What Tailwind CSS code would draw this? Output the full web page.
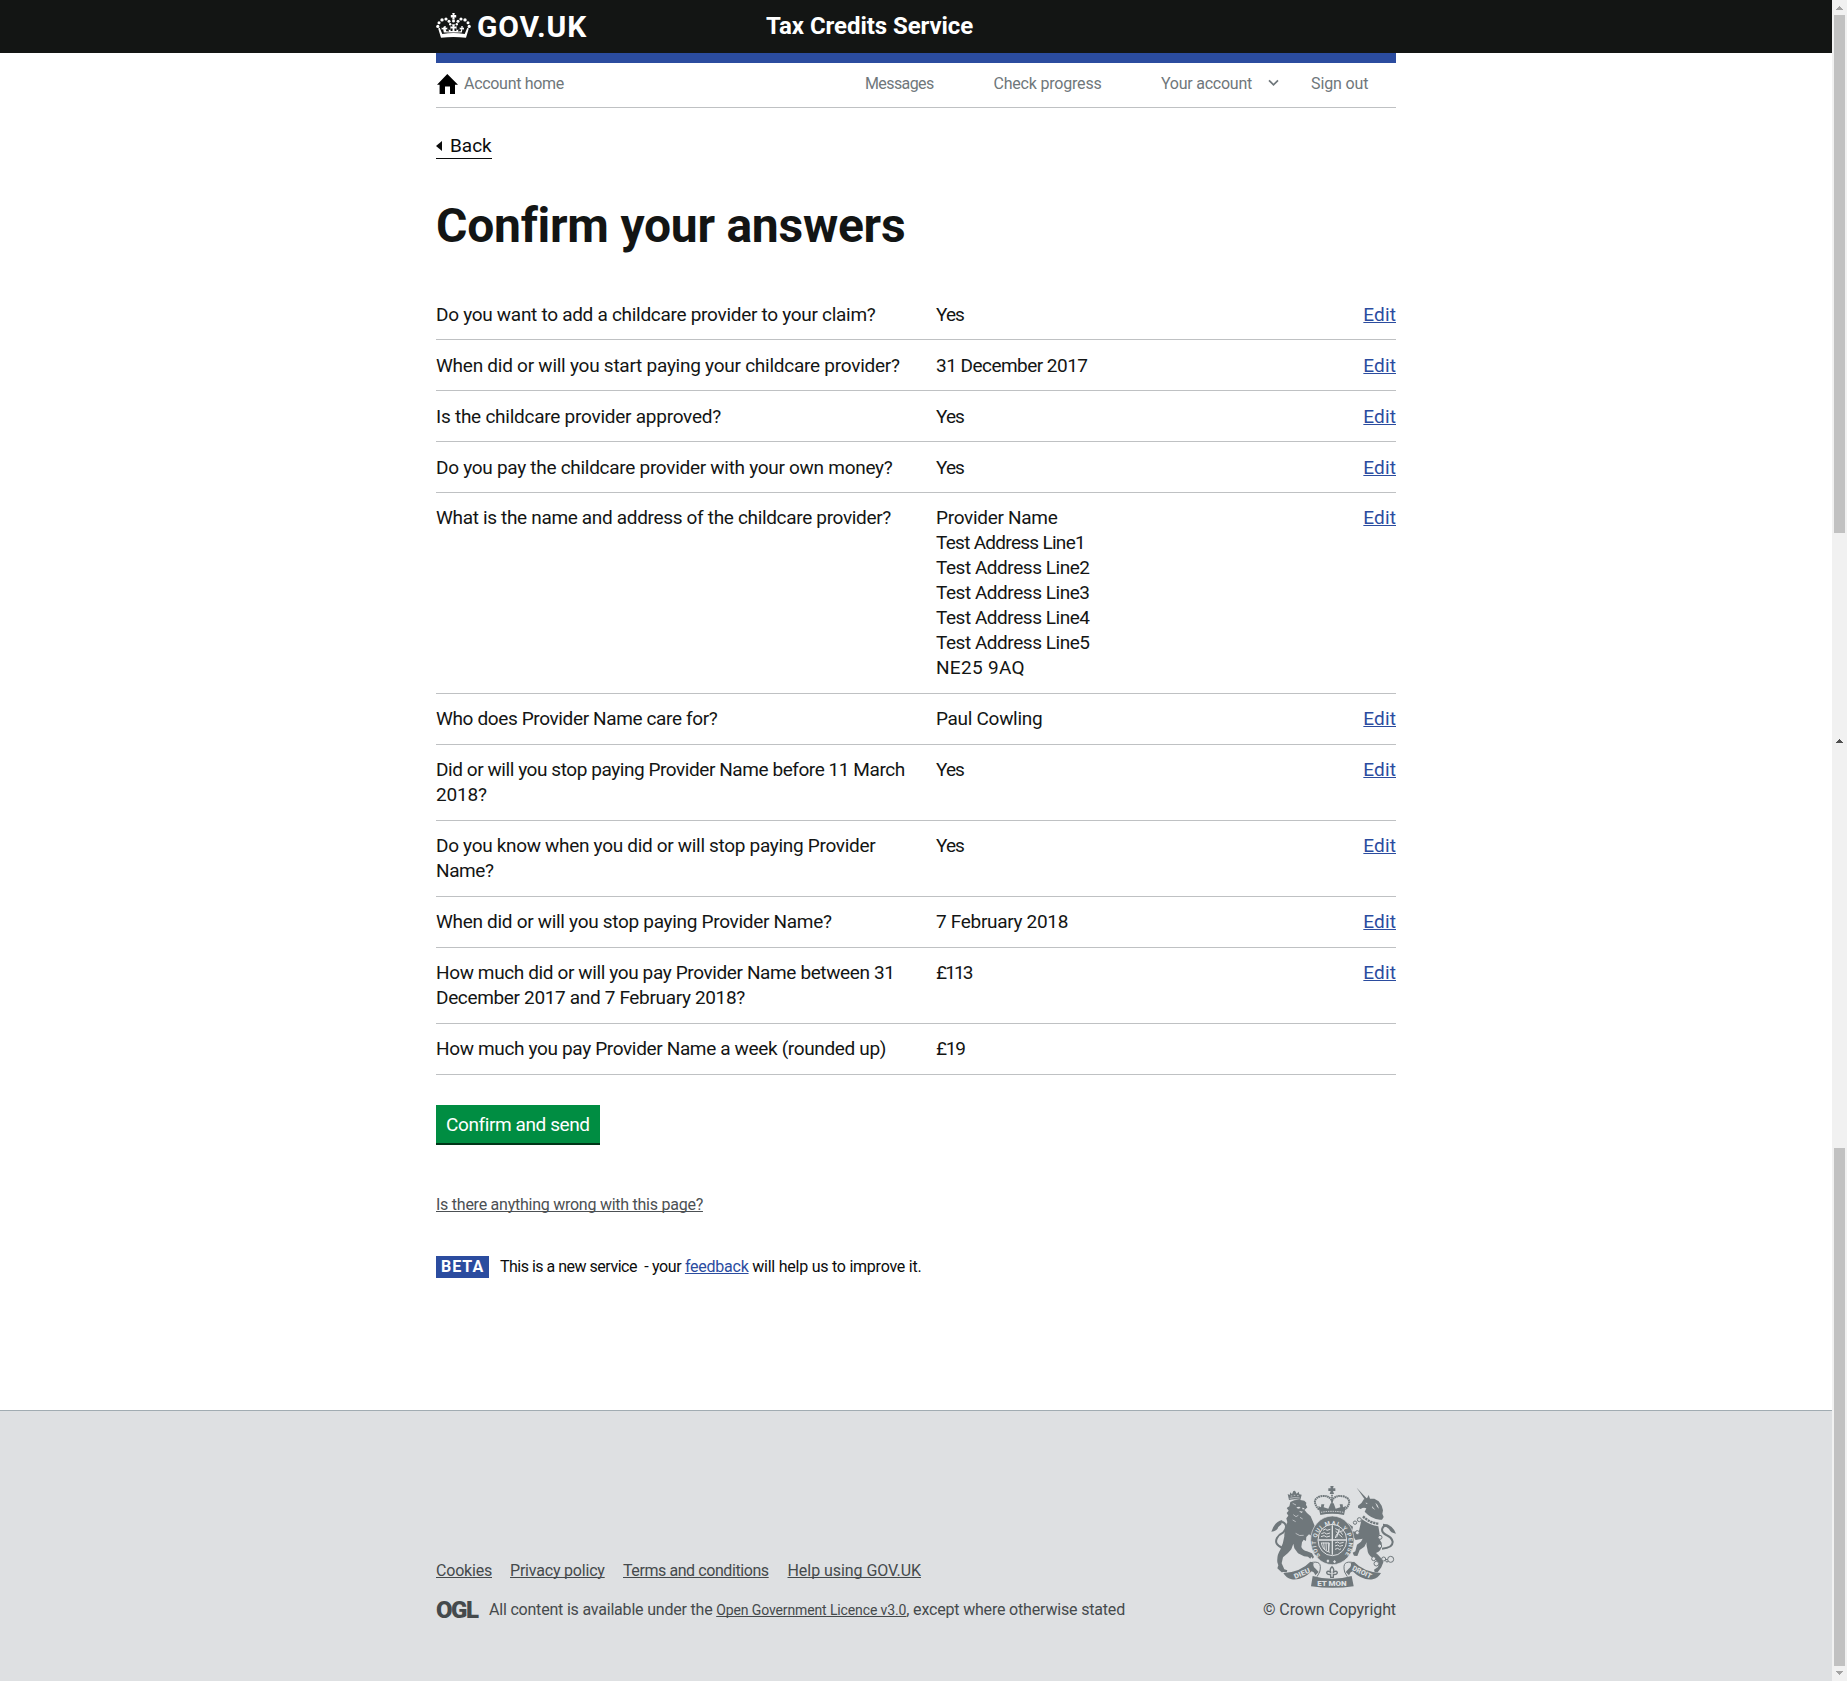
<!DOCTYPE html>
<html lang="en">
<head>
<meta charset="utf-8">
<title>Confirm your answers - Tax Credits Service</title>
<script src="https://cdn.jsdelivr.net/npm/@tailwindcss/browser@4"></script>
</head>
<body class="h-[1681px] overflow-hidden bg-white font-[Roboto,sans-serif] text-[#0b0c0c]">
<div class="flex h-[1681px]">
<div class="flex h-full w-[1832px] flex-col">

  <header class="h-[53px] bg-[#131514] text-white">
    <div class="mx-auto flex w-[960px] items-start">
      <div class="flex w-[330px] items-start gap-[5px]">
        <svg class="mt-[13px] h-[26px] w-[36px]" viewBox="0 0 36 26" fill="#fff">
          <path d="M16.2 0h2.6l-.5 2h1.9v2.4h-1.9l.6 2h-2.8l.6-2h-1.9V2h1.9z"/>
          <circle cx="17.5" cy="8" r="1.5"/>
          <circle cx="1.8" cy="13.4" r="1.6"/><circle cx="3" cy="9.8" r="1.5"/><circle cx="6" cy="6.9" r="1.7"/><circle cx="10" cy="6" r="1.6"/><circle cx="13" cy="8.3" r="1.5"/><circle cx="14.2" cy="11.2" r="1.2"/>
          <circle cx="33.2" cy="13.4" r="1.6"/><circle cx="32" cy="9.8" r="1.5"/><circle cx="29" cy="6.9" r="1.7"/><circle cx="25" cy="6" r="1.6"/><circle cx="22" cy="8.3" r="1.5"/><circle cx="20.8" cy="11.2" r="1.2"/>
          <path d="M2.2 15.4l1.5-.6 2.6 6.1q11.200-2 22.400 0l2.600-6.100 1.500.6-2.800 9.400q-12.500-1.700-25 0z"/>
          <path d="M8 13.200h2l-.4 1.700 1.700-.5v2.200l-1.600-.4.6 2.100 2.800.1-.7-2 1.800.7.800-1.500-.5 2.300q1 .6 2.200-.5l-.3-2.200-2 .5v-2.400l2.100.5-.4-2.500h2.800l-.4 2.500 2.100-.5v2.400l-2-.5-.3 2.200q1.200 1.100 2.200.5l-.5-2.300.8 1.500 1.800-.7-.7 2 2.800-.1.600-2.100-1.600.4v-2.200l1.700.5-.4-1.700h2l-.4 1.700 1.400-.3v1.800l-1.600-.2-.6 3.200h-18l-.6-3.200-1.600.2v-1.800l1.400.3z"/>
        </svg>
        <span class="mt-[12px] text-[30px] leading-[30px] font-bold tracking-[0.9px]">GOV.UK</span>
      </div>
      <span class="mt-[11px] text-[24px] leading-[30px] font-bold tracking-[-0.06px]">Tax Credits Service</span>
    </div>
  </header>

  <div class="mx-auto w-[960px]">
    <div class="h-[10px] bg-[#2b4c9f]"></div>
    <nav class="flex h-[45px] items-start border-b border-[#bfc1c3] pt-[11px] text-[16px] leading-[20px] text-[#6f777b]">
      <svg class="ml-[1px] h-[20px] w-[21px]" viewBox="0 0 21 20" fill="#000"><path d="M10.300 0L21 10.800h-3V20h-5v-7.500H8V20H2.600v-9.200H0z"/></svg>
      <a class="ml-[6px] tracking-[-0.3px]">Account home</a>
      <a class="ml-auto w-[69px] tracking-[-0.6px]">Messages</a>
      <a class="ml-[59.500px] w-[108px] tracking-[-0.2px]">Check progress</a>
      <a class="ml-[59.500px] w-[91px] whitespace-nowrap tracking-[-0.24px]">Your account</a>
      <svg class="mt-[5px] ml-[16px] h-[8px] w-[11px]" viewBox="0 0 11 8" fill="none" stroke="#6f777b" stroke-width="1.700"><path d="M1 1.300l4.500 4.500L10 1.300"/></svg>
      <a class="mr-[28px] ml-[32px] w-[57px] whitespace-nowrap tracking-[-0.12px]">Sign out</a>
    </nav>

    <main class="flex flex-col items-start">
      <a class="mt-[26px] flex w-[56px] items-center border-b border-[#0b0c0c] pb-[1px] text-[19px] leading-[23px]">
        <svg class="mr-[8px] h-[10px] w-[6px]" viewBox="0 0 6 10"><path fill="#0b0c0c" d="M6 0v10L0 5z"/></svg><span>Back</span>
      </a>
      <h1 class="mt-[42px] text-[48px] leading-[50px] font-bold tracking-[-0.25px] whitespace-nowrap text-[#131514]">Confirm your answers</h1>

      <dl class="mt-[38px] w-full text-[19px] leading-[25px] whitespace-nowrap text-[#131514]">
        <div class="flex border-b border-[#bfc1c3] pt-[13px] pb-[12px]">
          <dt class="w-[500px] tracking-[-0.29px]">Do you want to add a childcare provider to your claim?</dt>
          <dd class="tracking-[-0.9px]">Yes</dd>
          <dd class="ml-auto"><a class="text-[#2b4c9f] underline decoration-1 underline-offset-1 tracking-[0.12px] [text-decoration-skip-ink:none]">Edit</a></dd>
        </div>
        <div class="flex border-b border-[#bfc1c3] pt-[13px] pb-[12px]">
          <dt class="w-[500px] tracking-[-0.25px]">When did or will you start paying your childcare provider?</dt>
          <dd class="tracking-[-0.53px]">31 December 2017</dd>
          <dd class="ml-auto"><a class="text-[#2b4c9f] underline decoration-1 underline-offset-1 tracking-[0.12px] [text-decoration-skip-ink:none]">Edit</a></dd>
        </div>
        <div class="flex border-b border-[#bfc1c3] pt-[13px] pb-[12px]">
          <dt class="w-[500px] tracking-[-0.25px]">Is the childcare provider approved?</dt>
          <dd class="tracking-[-0.9px]">Yes</dd>
          <dd class="ml-auto"><a class="text-[#2b4c9f] underline decoration-1 underline-offset-1 tracking-[0.12px] [text-decoration-skip-ink:none]">Edit</a></dd>
        </div>
        <div class="flex border-b border-[#bfc1c3] pt-[13px] pb-[12px]">
          <dt class="w-[500px] tracking-[-0.285px]">Do you pay the childcare provider with your own money?</dt>
          <dd class="tracking-[-0.9px]">Yes</dd>
          <dd class="ml-auto"><a class="text-[#2b4c9f] underline decoration-1 underline-offset-1 tracking-[0.12px] [text-decoration-skip-ink:none]">Edit</a></dd>
        </div>
        <div class="flex border-b border-[#bfc1c3] pt-[12px] pb-[13px]">
          <dt class="w-[500px] tracking-[-0.33px]">What is the name and address of the childcare provider?</dt>
          <dd class="tracking-[-0.46px]"><span class="tracking-[-0.3px]">Provider Name</span><br><span class="tracking-[-0.713px]">Test Address Line1</span><br>Test Address Line2<br>Test Address Line3<br>Test Address Line4<br>Test Address Line5<br><span class="tracking-[0.316px]">NE25 9AQ</span></dd>
          <dd class="ml-auto"><a class="text-[#2b4c9f] underline decoration-1 underline-offset-1 tracking-[0.12px] [text-decoration-skip-ink:none]">Edit</a></dd>
        </div>
        <div class="flex border-b border-[#bfc1c3] pt-[12px] pb-[13px]">
          <dt class="w-[500px] tracking-[-0.37px]">Who does Provider Name care for?</dt>
          <dd class="tracking-[-0.3px]">Paul Cowling</dd>
          <dd class="ml-auto"><a class="text-[#2b4c9f] underline decoration-1 underline-offset-1 tracking-[0.12px] [text-decoration-skip-ink:none]">Edit</a></dd>
        </div>
        <div class="flex border-b border-[#bfc1c3] pt-[12px] pb-[13px]">
          <dt class="w-[500px] tracking-[-0.435px]">Did or will you stop paying Provider Name before 11 March<br><span class="tracking-[-0.2px]">2018?</span></dt>
          <dd class="tracking-[-0.9px]">Yes</dd>
          <dd class="ml-auto"><a class="text-[#2b4c9f] underline decoration-1 underline-offset-1 tracking-[0.12px] [text-decoration-skip-ink:none]">Edit</a></dd>
        </div>
        <div class="flex border-b border-[#bfc1c3] pt-[12px] pb-[13px]">
          <dt class="w-[500px] tracking-[-0.31px]">Do you know when you did or will stop paying Provider<br><span class="tracking-[-0.4px]">Name?</span></dt>
          <dd class="tracking-[-0.9px]">Yes</dd>
          <dd class="ml-auto"><a class="text-[#2b4c9f] underline decoration-1 underline-offset-1 tracking-[0.12px] [text-decoration-skip-ink:none]">Edit</a></dd>
        </div>
        <div class="flex border-b border-[#bfc1c3] pt-[12px] pb-[13px]">
          <dt class="w-[500px] tracking-[-0.3px]">When did or will you stop paying Provider Name?</dt>
          <dd class="tracking-[-0.31px]">7 February 2018</dd>
          <dd class="ml-auto"><a class="text-[#2b4c9f] underline decoration-1 underline-offset-1 tracking-[0.12px] [text-decoration-skip-ink:none]">Edit</a></dd>
        </div>
        <div class="flex border-b border-[#bfc1c3] pt-[12px] pb-[13px]">
          <dt class="w-[500px] tracking-[-0.38px]">How much did or will you pay Provider Name between 31<br><span class="tracking-[-0.34px]">December 2017 and 7 February 2018?</span></dt>
          <dd class="tracking-[-1.9px]">£113</dd>
          <dd class="ml-auto"><a class="text-[#2b4c9f] underline decoration-1 underline-offset-1 tracking-[0.12px] [text-decoration-skip-ink:none]">Edit</a></dd>
        </div>
        <div class="flex border-b border-[#bfc1c3] pt-[12px] pb-[13px]">
          <dt class="w-[500px] tracking-[-0.35px]">How much you pay Provider Name a week (rounded up)</dt>
          <dd class="tracking-[-1.3px]">£19</dd>
        </div>
      </dl>

      <button class="mt-[30px] h-[38px] w-[164px] bg-[#008d42] pt-[8px] pb-[7px] pl-[10px] text-left text-[19px] leading-[23px] tracking-[-0.4px] whitespace-nowrap text-white shadow-[0_2px_0_#003618]">Confirm and send</button>

      <a class="mt-[52px] text-[16px] leading-[20px] tracking-[-0.25px] text-[#4c5053] underline decoration-1 underline-offset-1 [text-decoration-skip-ink:none]">Is there anything wrong with this page?</a>

      <div class="mt-[41px] flex h-[22px] items-start text-[16px] leading-[20px] whitespace-pre">
        <strong class="mr-[11px] h-[22px] w-[53px] bg-[#2b4c9f] pt-[1px] pl-[5px] font-bold tracking-[1px] text-white">BETA</strong>
        <span class="pt-[1px] tracking-[-0.24px]"><span class="tracking-[-0.5px]">This is a new service</span>  <span class="tracking-[-0.38px]">- your </span><a class="text-[#2b4c9f] underline decoration-1 underline-offset-1 [text-decoration-skip-ink:none]">feedback</a> will help us to improve it.</span>
      </div>
    </main>
  </div>

  <footer class="mt-[132px] grow border-t border-[#a1acb2] bg-[#dee0e2] text-[16px] leading-[20px] text-[#454a4c]">
    <div class="mx-auto flex h-[209px] w-[960px] items-end justify-between whitespace-nowrap">
      <div class="flex flex-col">
        <div class="flex">
          <a class="w-[74px] tracking-[-0.2px]"><span class="underline decoration-1 underline-offset-1 [text-decoration-skip-ink:none]">Cookies</span></a>
          <a class="w-[113px] tracking-[-0.2px]"><span class="underline decoration-1 underline-offset-1 [text-decoration-skip-ink:none]">Privacy policy</span></a>
          <a class="w-[164.500px] tracking-[-0.42px]"><span class="underline decoration-1 underline-offset-1 [text-decoration-skip-ink:none]">Terms and conditions</span></a>
          <a class="tracking-[-0.05px]"><span class="underline decoration-1 underline-offset-1 [text-decoration-skip-ink:none]">Help using GOV.UK</span></a>
        </div>
        <div class="mt-[19px] flex h-[20px] items-start">
          <span class="w-[53px] text-[24px] leading-[20px] font-black tracking-[-1.5px]">OGL</span>
          <p><span class="tracking-[-0.2px]">All content is available under the </span><a class="text-[14px] tracking-[-0.12px] underline decoration-1 underline-offset-1 [text-decoration-skip-ink:none]">Open Government Licence v3.0</a><span class="tracking-[-0.18px]">, except where otherwise stated</span></p>
        </div>
      </div>

      <div class="flex flex-col items-end">
        <svg class="mb-[11px] h-[104px] w-[126px]" viewBox="60 45 378 312" fill="#6f777b">
          <!-- central crown -->
          <path d="M241 48h10l-2 7h7v8h-7l3 9h-13l3-9h-7v-8h7z"/>
          <path fill="none" stroke="#6f777b" stroke-width="6" stroke-dasharray="5 1.500" d="M207 119Q180 88 212 79q25-5 34 14q8-19 34-14q32 9 6 40"/>
          <path fill="none" stroke="#6f777b" stroke-width="5" stroke-dasharray="5 1.500" d="M246 74v36"/>
          <path d="M205 108l8 4 1-9h9l-2 9 14 4 7-16h9l6 16 14-4-2-9h9l1 9 9-4-6 27q-36-7-71 0z"/>
          <path fill="none" stroke="#dee0e2" stroke-width="3" stroke-dasharray="4 3" d="M213 127q33-6 67 0"/>
          <!-- lion -->
          <path d="M113 72l6 3 2-8 5 6 4-10 5-1 5 9 6-6 2 8 7 1-4 16q-17-5-34 0z"/>
          <path fill="none" stroke="#dee0e2" stroke-width="2" d="M119 85q15-4 30-1M122 78h5M131 76h5M141 77h5"/>
          <path d="M121 96q14-8 30-6l12 2 6 6-1 6 4 8-5 5-4 2 8 10 11 10 6 14 6 14-2 12 6 10-6 2 8 11-5 3-18-12-8 8-1 12-7-4-5 8-2 14q4 10 17 13l15 6 6 11-4 5-4-6-3 6-7-6-12-1-18-9-11-15-3-14-6 17-10 11-15 13-4 18 8 18 9 3-2 6-9-1-6 1-5-5-8-7 3-9-3-9q-2-22 9-38 9-18 12-40-1-22 9-42l-3-12 6-8-5-8 6-7-6-8 8-5z"/>
          <path fill="#dee0e2" d="M139 112l9-2 4 4-8 2zM156 113l8 2-5 4zM147 123l12 2-5 4z"/>
          <path fill="none" stroke="#dee0e2" stroke-width="2" d="M128 100l10 5M130 134l8 6 7-4M128 150l9 5M150 142l8 5M137 190q12 10 24 6"/>
          <path fill="none" stroke="#6f777b" stroke-width="6" d="M98 234Q71 224 81 204q5-10 18-16 10-9 9-20-3-12-14-12"/>
          <path d="M64 185q10-31 33-35l-3 13-9 8q-4 13-21 14z"/>
          <!-- unicorn -->
          <path d="M320 53l32 34-5 5z"/>
          <path d="M346 88l6-5 4-8 4 11 13 0 13 8 9 13 4 14-2 10 4 10-5 8-6 0q-26-2-46-24l5-10q-8-5-17 2l-8-4 0-6q13-8 18-20z"/>
          <path fill="#dee0e2" d="M346 98l7 1-3 3zM376 98q9 6 11 18l-6-6zM366 108l10 12-9-6z"/>
          <path fill="none" stroke="#6f777b" stroke-width="7" stroke-dasharray="7 2" d="M339 139q20 20 46 22"/>
          <path d="M335 147q24 18 50 22l4 23q-4 15 6 26 2 25-17 31 17 14 22 28l-6 15-11 15-9-1-2-7 12-8 3-13-19-15q-15-7-16-26-5-17 0-24l-9 17-14 10-7 18-10-1-4-9 8-4 5-20 12-9 5-9-21 4-13-17-8-7-6 4-7-5-2-17 13-8 15 10-3 14 20 3z"/>
          <g fill="#dee0e2" stroke="#6f777b" stroke-width="3"><circle cx="315" cy="158" r="5"/><circle cx="328" cy="149" r="6"/><circle cx="322" cy="188" r="6"/><circle cx="390" cy="202" r="6"/><circle cx="389" cy="228" r="6"/><circle cx="371" cy="266" r="6"/><circle cx="379" cy="281" r="7"/><circle cx="401" cy="267" r="6"/><circle cx="411" cy="272" r="4"/><circle cx="422" cy="268" r="9"/></g>
          <path fill="none" stroke="#6f777b" stroke-width="6" d="M396 236q33-2 32-21-3-13-19-20-16-8-12-20 4-10 18-8"/>
          <path d="M399 161q28 1 39 30-16-2-21-14-7-8-18-9z"/>
          <!-- garter and shield -->
          <ellipse cx="247" cy="211" rx="65" ry="73" stroke="#dee0e2" stroke-width="2"/>
          <ellipse cx="247" cy="210" rx="43" ry="47" fill="none" stroke="#dee0e2" stroke-width="3"/>
          <path stroke="#dee0e2" stroke-width="4" d="M247 166v88M205 210h84"/>
          <g fill="none" stroke="#dee0e2" stroke-width="3">
            <path d="M219 181l7-4 5 4 10-3M214 191l9-3 7 4 10-3M213 200l9-3 8 4 10-3"/>
            <path d="M256 176q14 3 22 18M256 204q4-20 24-22M257 184l20 18M268 176l-8 26"/>
            <path d="M214 218q3 24 26 29M221 218l2 20M228 218l1 24M235 218l1 27M214 219h24l-2 25"/>
            <path d="M255 219l8-3 6 4 12-3M255 228l8-3 6 4 10-3M255 238l8-3 6 4 4-3"/>
          </g>
          <path id="garter" fill="none" d="M212 257A49 54 0 1 1 282 257"/>
          <text font-family="Roboto" font-size="18" font-weight="700" fill="#dee0e2"><textPath href="#garter" textLength="240" lengthAdjust="spacing">SOIT QUI MAL Y PENSE</textPath></text>
          <path fill="#dee0e2" d="M234 268l4 5-4 5-5-5zM254 270l4 5-4 5-5-5z"/>
          <!-- motto ribbon -->
          <path d="M100 309q52-3 81-34l10 4q-4 10 6 17l9 10-10 10q-3-10-11-12-28 28-60 24-16-3-25-19z"/>
          <path d="M393 309q-52-3-81-34l-10 4q4 10-6 17l-9 10 10 10q3-10 11-12 28 28 60 24 16-3 25-19z"/>
          <path d="M188 318q57 17 117 0l6 31q-63 9-128 0z"/>
          <path fill="none" stroke="#6f777b" stroke-width="3" d="M181 278q20-4 26 2 7 6 2 26l-8 14M312 278q-20-4-26 2-7 6-2 26l8 14"/>
          <path fill="none" stroke="#6f777b" stroke-width="4" d="M246 290q9 8 3 18 9-8 13-1 0 8-12 6v9h-8v-9q-12 2-12-6 4-7 13 1-6-10 3-18z"/>
          <g font-family="Roboto" font-weight="900" font-size="21" fill="#dee0e2">
            <text transform="translate(136 327) rotate(-24)" textLength="50" lengthAdjust="spacingAndGlyphs">DIEU</text>
            <text x="202" y="347" textLength="88" lengthAdjust="spacingAndGlyphs">ET MON</text>
            <text transform="translate(305 299) rotate(26)" textLength="62" lengthAdjust="spacingAndGlyphs">DROIT</text>
          </g>
        </svg>
        <span class="tracking-[-0.09px]">© Crown Copyright</span>
      </div>
    </div>
  </footer>
</div>

<!-- scrollbars -->
<div class="flex h-full w-[15px] flex-col items-center bg-[#f1f1f1]">
  <svg class="mt-[6px] h-[4px] w-[7px]" viewBox="0 0 7 4" fill="#a3a3a3"><path d="M3 0h1v1h1v1h1v1h1v1H0V3h1V2h1V1h1z"/></svg>
  <div class="mt-[5px] h-[518px] w-[11px] bg-[#c1c1c1]"></div>
  <svg class="mt-[206px] h-[4px] w-[7px]" viewBox="0 0 7 4" fill="#505050"><path d="M3 0h1v1h1v1h1v1h1v1H0V3h1V2h1V1h1z"/></svg>
  <div class="mt-[405px] h-[518px] w-[11px] bg-[#c1c1c1]"></div>
  <svg class="mt-[5px] h-[4px] w-[7px]" viewBox="0 0 7 4" fill="#a3a3a3"><path d="M0 0h7v1H6v1H5v1H4v1H3V3H2V2H1V1H0z"/></svg>
</div>
</div>
</body>
</html>
